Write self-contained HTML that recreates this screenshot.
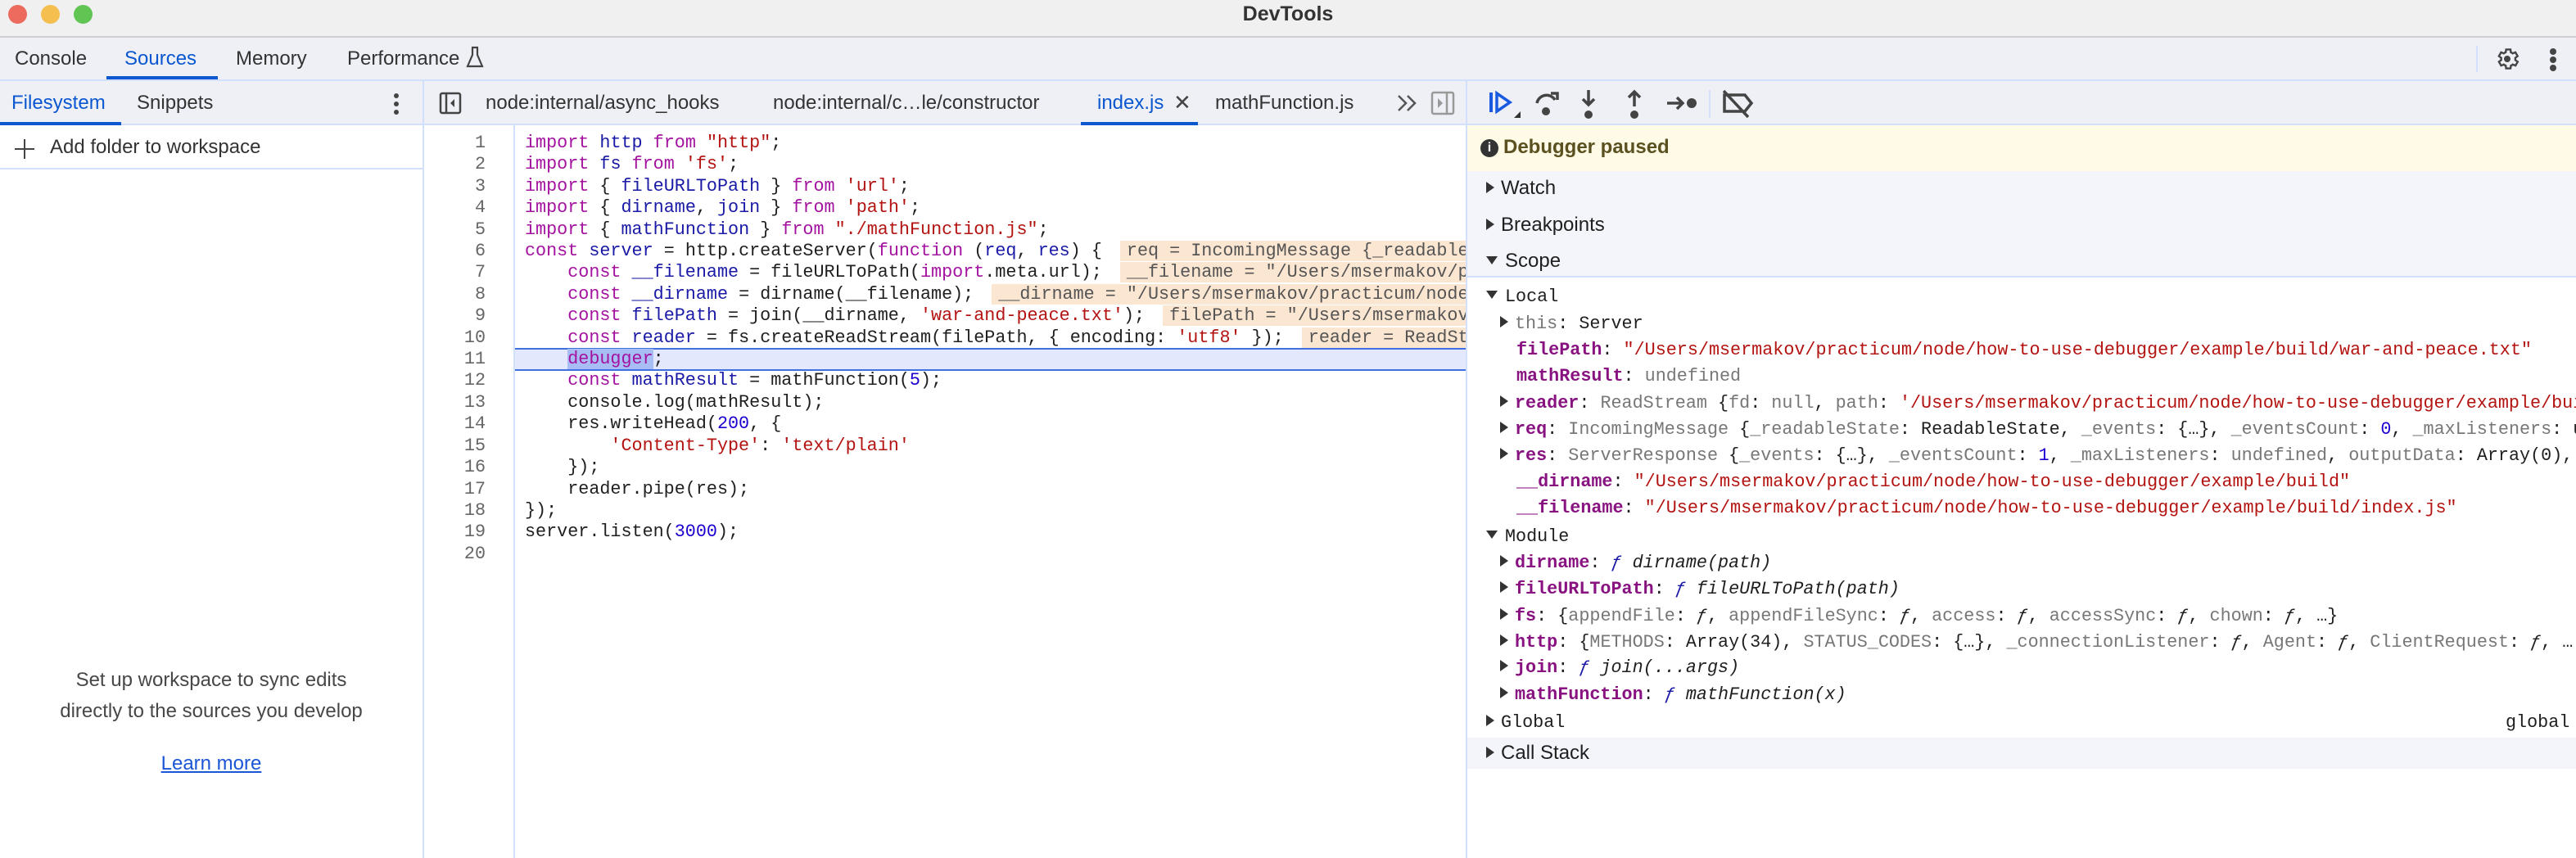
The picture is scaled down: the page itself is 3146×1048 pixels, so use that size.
<!DOCTYPE html>
<html><head><meta charset="utf-8"><style>
*{margin:0;padding:0;box-sizing:border-box}
body{width:3146px;height:1048px;overflow:hidden;background:#fff;font-family:"Liberation Sans",sans-serif;font-size:24px;color:#1f1f1f;position:relative}
.a{position:absolute;white-space:pre}
.m{font-family:"Liberation Mono",monospace;font-size:21.75px}
.k{color:#a3139f}.d{color:#1a1aa6}.s{color:#b31412}.n{color:#1c00cf}.g{color:#777}
.p{color:#881280;font-weight:bold}
.iv{display:inline-block;background:#fbe6d2;color:#555;padding:0 8px;margin-left:22px;height:25px;line-height:25px;vertical-align:top}
.tri{display:inline-block;width:0;height:0;border-top:7px solid transparent;border-bottom:7px solid transparent;border-left:10px solid #333;margin-right:8px;vertical-align:middle;position:relative;top:-2px}
.tri.o{border-left:7px solid transparent;border-right:7px solid transparent;border-top:10px solid #333;border-bottom:0;margin-right:9px;top:-2px}
</style></head><body>
<!-- title bar -->
<div class="a" style="left:0;top:0;width:3146px;height:46px;background:#f0f0f0;border-bottom:2px solid #cfcfcf"></div>
<div class="a" style="left:10px;top:6px;width:23px;height:23px;border-radius:50%;background:#ec6a5e"></div>
<div class="a" style="left:50px;top:6px;width:23px;height:23px;border-radius:50%;background:#f4bf4f"></div>
<div class="a" style="left:90px;top:6px;width:23px;height:23px;border-radius:50%;background:#61c554"></div>
<div class="a" style="left:0;width:3146px;top:3px;text-align:center;font-weight:bold;font-size:25px;color:#333">DevTools</div>
<!-- main tabs -->
<div class="a" style="left:0;top:46px;width:3146px;height:53px;background:#eef0f6;border-bottom:2px solid #d3e0fb"></div>
<div class="a" style="left:18px;top:58px;color:#333">Console</div>
<div class="a" style="left:152px;top:58px;color:#0b57d0">Sources</div>
<div class="a" style="left:130px;top:93px;width:136px;height:4px;background:#0b57d0"></div>
<div class="a" style="left:288px;top:58px;color:#333">Memory</div>
<div class="a" style="left:424px;top:58px;color:#333">Performance</div>
<svg class="a" style="left:568px;top:56px" width="24" height="28" viewBox="0 0 24 28"><path d="M8 2h8M9 2v9L3 25h18L15 11V2" fill="none" stroke="#444" stroke-width="2.2"/></svg>
<div class="a" style="left:3024px;top:56px;width:2px;height:32px;background:#d3e0fb"></div>
<svg class="a" style="left:3046px;top:56px" width="32" height="32" viewBox="0 0 24 24"><path d="M19.4 13a7.5 7.5 0 000-2l2.1-1.6-2-3.5-2.5 1a7.6 7.6 0 00-1.7-1L15 3.3h-4l-.4 2.6a7.6 7.6 0 00-1.7 1l-2.5-1-2 3.5L6.5 11a7.5 7.5 0 000 2l-2.1 1.6 2 3.5 2.5-1a7.6 7.6 0 001.7 1l.4 2.6h4l.4-2.6a7.6 7.6 0 001.7-1l2.5 1 2-3.5z" fill="none" stroke="#444" stroke-width="1.8"/><circle cx="12" cy="12" r="3" fill="#444"/></svg>
<div class="a" style="left:3114px;top:59px;width:8px;height:8px;border-radius:50%;background:#444"></div>
<div class="a" style="left:3114px;top:68px;width:8px;height:8px;border-radius:50%;background:#444;top:69px"></div>
<div class="a" style="left:3114px;top:79px;width:8px;height:8px;border-radius:50%;background:#444"></div>
<!-- second row bg -->
<div class="a" style="left:0;top:99px;width:3146px;height:54px;background:#eef0f6;border-bottom:2px solid #d3e0fb"></div>
<!-- left panel -->
<div class="a" style="left:14px;top:112px;color:#0b57d0">Filesystem</div>
<div class="a" style="left:0;top:149px;width:148px;height:4px;background:#0b57d0"></div>
<div class="a" style="left:167px;top:112px;color:#333">Snippets</div>
<div class="a" style="left:481px;top:114px;width:6px;height:6px;border-radius:50%;background:#444"></div>
<div class="a" style="left:481px;top:124px;width:6px;height:6px;border-radius:50%;background:#444"></div>
<div class="a" style="left:481px;top:134px;width:6px;height:6px;border-radius:50%;background:#444"></div>
<div class="a" style="left:0;top:153px;width:516px;height:54px;border-bottom:2px solid #d3e0fb"></div>
<div class="a" style="left:18px;top:181px;width:24px;height:2px;background:#444"></div>
<div class="a" style="left:29px;top:170px;width:2px;height:24px;background:#444"></div>
<div class="a" style="left:61px;top:166px;color:#333">Add folder to workspace</div>
<div class="a" style="left:0;width:516px;top:812px;text-align:center;color:#474747;line-height:38px">Set up workspace to sync edits
directly to the sources you develop</div>
<div class="a" style="left:0;width:516px;top:919px;text-align:center;color:#1a56d6;text-decoration:underline">Learn more</div>
<div class="a" style="left:516px;top:99px;width:2px;height:949px;background:#d3e0fb"></div>
<!-- editor tabs -->
<svg class="a" style="left:536px;top:112px" width="28" height="28" viewBox="0 0 28 28"><rect x="2" y="2" width="24" height="24" rx="2" fill="none" stroke="#444" stroke-width="2.5"/><path d="M9 2v24" stroke="#444" stroke-width="2.5"/><path d="M19 9l-5 5 5 5z" fill="#444"/></svg>
<div class="a" style="left:593px;top:112px;color:#333">node:internal/async_hooks</div>
<div class="a" style="left:944px;top:112px;color:#333">node:internal/c…le/constructor</div>
<div class="a" style="left:1340px;top:112px;color:#0b57d0">index.js</div>
<div class="a" style="left:1433px;top:110px;color:#444;font-size:26px">✕</div>
<div class="a" style="left:1320px;top:149px;width:143px;height:4px;background:#0b57d0"></div>
<div class="a" style="left:1484px;top:112px;color:#333">mathFunction.js</div>
<svg class="a" style="left:1706px;top:114px" width="26" height="24" viewBox="0 0 26 24"><path d="M2 3l9 9-9 9M13 3l9 9-9 9" fill="none" stroke="#555" stroke-width="2.5"/></svg>
<svg class="a" style="left:1747px;top:111px" width="30" height="30" viewBox="0 0 30 30"><rect x="2" y="2" width="26" height="26" rx="2" fill="none" stroke="#999" stroke-width="2.5"/><path d="M20 2v26" stroke="#999" stroke-width="2.5"/><path d="M9 9l6 6-6 6z" fill="#999"/></svg>
<!-- code area -->
<div class="a" style="left:627px;top:153px;width:2px;height:895px;background:#d3e0fb"></div>
<div class="a" style="left:629px;top:425px;width:1161px;height:28px;background:#e3e8fc;border-top:2px solid #3f6fe0;border-bottom:2px solid #3f6fe0"></div>
<div class="a m" style="left:520px;width:73px;top:162px;line-height:26.4px;text-align:right;color:#666">1
2
3
4
5
6
7
8
9
10
11
12
13
14
15
16
17
18
19
20</div>
<div class="a m" style="left:641px;top:162px;width:1149px;overflow:hidden;line-height:26.4px"><span class="k">import</span> <span class="d">http</span> <span class="k">from</span> <span class="s">"http"</span>;
<span class="k">import</span> <span class="d">fs</span> <span class="k">from</span> <span class="s">'fs'</span>;
<span class="k">import</span> { <span class="d">fileURLToPath</span> } <span class="k">from</span> <span class="s">'url'</span>;
<span class="k">import</span> { <span class="d">dirname</span>, <span class="d">join</span> } <span class="k">from</span> <span class="s">'path'</span>;
<span class="k">import</span> { <span class="d">mathFunction</span> } <span class="k">from</span> <span class="s">"./mathFunction.js"</span>;
<span class="k">const</span> <span class="d">server</span> = http.createServer(<span class="k">function</span> (<span class="d">req</span>, <span class="d">res</span>) {<span class="iv">req = IncomingMessage {_readableState: ReadableState</span>
    <span class="k">const</span> <span class="d">__filename</span> = fileURLToPath(<span class="k">import</span>.meta.url);<span class="iv">__filename = "/Users/msermakov/practicum</span>
    <span class="k">const</span> <span class="d">__dirname</span> = dirname(__filename);<span class="iv">__dirname = "/Users/msermakov/practicum/node/how</span>
    <span class="k">const</span> <span class="d">filePath</span> = join(__dirname, <span class="s">'war-and-peace.txt'</span>);<span class="iv">filePath = "/Users/msermakov/prac</span>
    <span class="k">const</span> <span class="d">reader</span> = fs.createReadStream(filePath, { encoding: <span class="s">'utf8'</span> });<span class="iv">reader = ReadStream {fd</span>
    <span class="k" style="background:#a9bdf5">debugger</span>;
    <span class="k">const</span> <span class="d">mathResult</span> = mathFunction(<span class="n">5</span>);
    console.log(mathResult);
    res.writeHead(<span class="n">200</span>, {
        <span class="s">'Content-Type'</span>: <span class="s">'text/plain'</span>
    });
    reader.pipe(res);
});
server.listen(<span class="n">3000</span>);
</div>
<!-- right panel -->
<div class="a" style="left:1790px;top:99px;width:2px;height:949px;background:#d3e0fb"></div>
<svg class="a" style="left:1816px;top:106px" width="340" height="42" viewBox="0 0 340 42">
<rect x="3" y="7" width="4" height="24" fill="#1a5ae0"/><path d="M12 8l16 11-16 11z" fill="none" stroke="#1a5ae0" stroke-width="3.5"/><path d="M33 38l8-8v8z" fill="#333"/>
<path d="M61 20a12 12 0 0 1 22-4" fill="none" stroke="#444" stroke-width="3.5"/><path d="M78 8h8v8" fill="none" stroke="#444" stroke-width="3.5"/><circle cx="72" cy="30" r="5" fill="#444"/>
<path d="M124 4v18M117 15l7 7 7-7" fill="none" stroke="#444" stroke-width="3.5"/><circle cx="124" cy="34" r="5" fill="#444"/>
<path d="M180 24V6M173 13l7-7 7 7" fill="none" stroke="#444" stroke-width="3.5"/><circle cx="180" cy="34" r="5" fill="#444"/>
<path d="M220 20h18M232 13l7 7-7 7" fill="none" stroke="#444" stroke-width="3.5"/><circle cx="250" cy="20" r="6" fill="#444"/>
<rect x="271" y="4" width="2" height="34" fill="#d3e0fb"/>
<path d="M290 10h25l8 10-8 10h-25z" fill="none" stroke="#444" stroke-width="3.5"/><path d="M289 5l30 32" stroke="#444" stroke-width="3.5"/>
</svg>
<div class="a" style="left:1792px;top:153px;width:1354px;height:56px;background:#fffbe6"></div>
<div class="a" style="left:1808px;top:170px;width:22px;height:22px;border-radius:50%;background:#333;color:#fff;font-size:16px;font-weight:bold;text-align:center;line-height:22px">i</div>
<div class="a" style="left:1836px;top:166px;font-weight:bold;color:#5b5020">Debugger paused</div>
<div class="a" style="left:1792px;top:209px;width:1354px;height:130px;background:#f3f5fb;border-bottom:2px solid #d3e0fb"></div>
<div class="a" style="left:1815px;top:216px"><span class="tri"></span>Watch</div>
<div class="a" style="left:1815px;top:261px"><span class="tri"></span>Breakpoints</div>
<div class="a" style="left:1815px;top:305px"><span class="tri o"></span>Scope</div>
<div class="a m" style="left:1815px;top:350px"><span class="tri o"></span>Local</div>
<div class="a m" style="left:1832px;top:383px"><span class="tri"></span><span class="g">this</span>: Server</div>
<div class="a m" style="left:1852px;top:415px"><span class="p">filePath</span>: <span class="s">"/Users/msermakov/practicum/node/how-to-use-debugger/example/build/war-and-peace.txt"</span></div>
<div class="a m" style="left:1852px;top:447px"><span class="p">mathResult</span>: <span class="g">undefined</span></div>
<div class="a m" style="left:1832px;top:480px"><span class="tri"></span><span class="p">reader</span>: <span class="g">ReadStream</span> {<span class="g">fd</span>: <span class="g">null</span>, <span class="g">path</span>: <span class="s">'/Users/msermakov/practicum/node/how-to-use-debugger/example/build</span></div>
<div class="a m" style="left:1832px;top:512px"><span class="tri"></span><span class="p">req</span>: <span class="g">IncomingMessage</span> {<span class="g">_readableState</span>: ReadableState, <span class="g">_events</span>: {…}, <span class="g">_eventsCount</span>: <span class="n">0</span>, <span class="g">_maxListeners</span>: undefined</div>
<div class="a m" style="left:1832px;top:544px"><span class="tri"></span><span class="p">res</span>: <span class="g">ServerResponse</span> {<span class="g">_events</span>: {…}, <span class="g">_eventsCount</span>: <span class="n">1</span>, <span class="g">_maxListeners</span>: <span class="g">undefined</span>, <span class="g">outputData</span>: Array(0), ou</div>
<div class="a m" style="left:1852px;top:576px"><span class="p">__dirname</span>: <span class="s">"/Users/msermakov/practicum/node/how-to-use-debugger/example/build"</span></div>
<div class="a m" style="left:1852px;top:608px"><span class="p">__filename</span>: <span class="s">"/Users/msermakov/practicum/node/how-to-use-debugger/example/build/index.js"</span></div>
<div class="a m" style="left:1815px;top:643px"><span class="tri o"></span>Module</div>
<div class="a m" style="left:1832px;top:675px"><span class="tri"></span><span class="p">dirname</span>: <i><span class="d">ƒ</span> dirname(path)</i></div>
<div class="a m" style="left:1832px;top:707px"><span class="tri"></span><span class="p">fileURLToPath</span>: <i><span class="d">ƒ</span> fileURLToPath(path)</i></div>
<div class="a m" style="left:1832px;top:740px"><span class="tri"></span><span class="p">fs</span>: {<span class="g">appendFile</span>: <i>ƒ</i>, <span class="g">appendFileSync</span>: <i>ƒ</i>, <span class="g">access</span>: <i>ƒ</i>, <span class="g">accessSync</span>: <i>ƒ</i>, <span class="g">chown</span>: <i>ƒ</i>, …}</div>
<div class="a m" style="left:1832px;top:772px"><span class="tri"></span><span class="p">http</span>: {<span class="g">METHODS</span>: Array(34), <span class="g">STATUS_CODES</span>: {…}, <span class="g">_connectionListener</span>: <i>ƒ</i>, <span class="g">Agent</span>: <i>ƒ</i>, <span class="g">ClientRequest</span>: <i>ƒ</i>, …</div>
<div class="a m" style="left:1832px;top:803px"><span class="tri"></span><span class="p">join</span>: <i><span class="d">ƒ</span> join(...args)</i></div>
<div class="a m" style="left:1832px;top:836px"><span class="tri"></span><span class="p">mathFunction</span>: <i><span class="d">ƒ</span> mathFunction(x)</i></div>
<div class="a m" style="left:1815px;top:870px"><span class="tri"></span>Global</div>
<div class="a m" style="left:3060px;top:870px">global</div>
<div class="a" style="left:1792px;top:901px;width:1354px;height:38px;background:#f3f5fb"></div>
<div class="a" style="left:1815px;top:906px"><span class="tri"></span>Call Stack</div>
</body></html>
